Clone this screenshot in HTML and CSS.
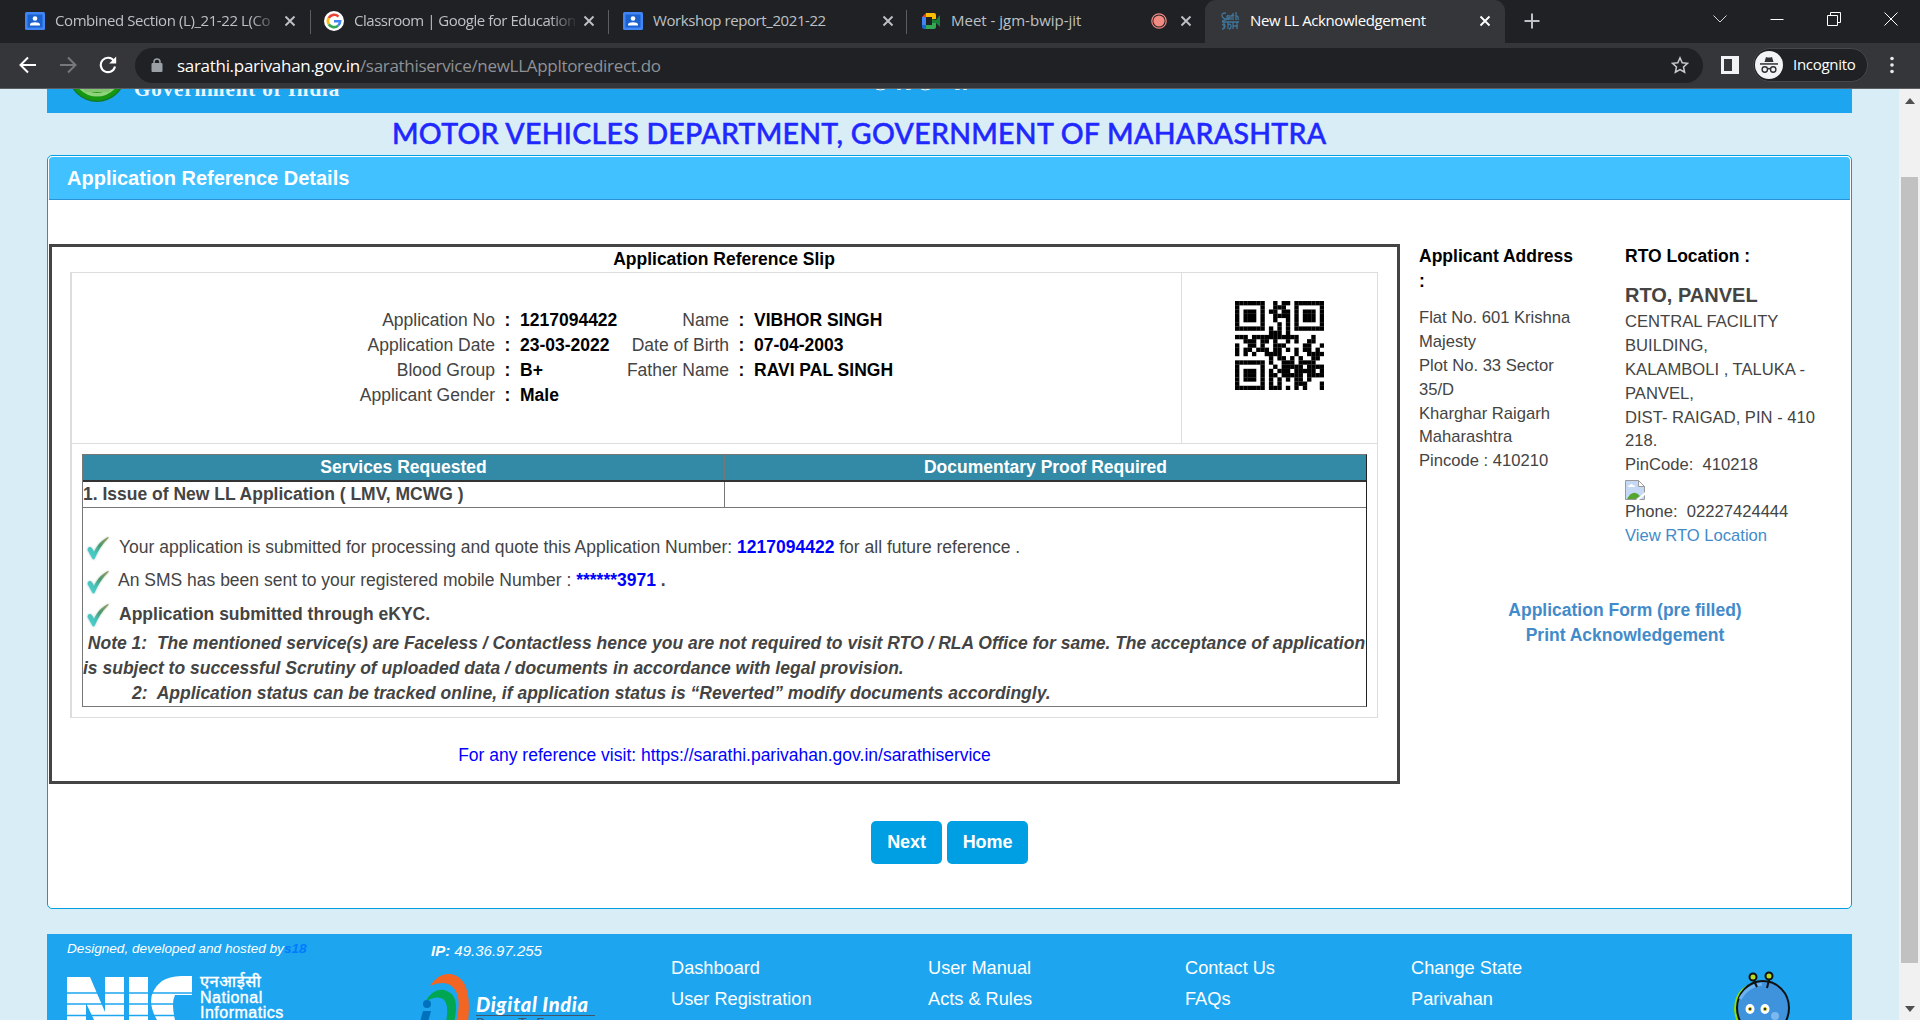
FILE: index.html
```html
<!DOCTYPE html>
<html lang="en">
<head>
<meta charset="utf-8">
<title>New LL Acknowledgement</title>
<link rel="stylesheet" href="styles.css">
</head>
<body>
<svg class="defs" width="0" height="0">
  <symbol id="x" viewBox="0 0 12 12"><path d="M1.5 1.5l9 9M10.5 1.5l-9 9" stroke="currentColor" stroke-width="1.9" fill="none"/></symbol>
  <symbol id="classroom" viewBox="0 0 20 18"><rect width="20" height="18" rx="1.5" fill="#4285f4"/><rect x="2.5" y="2.500" width="15" height="13" fill="#1b62cf"/><circle cx="10" cy="6.500" r="2.300" fill="#fff"/><path d="M5 13.500v-1c0-3 10-3 10 0v1z" fill="#fff"/></symbol>
  <symbol id="tick" viewBox="0 0 26 26"><path d="M2 13c2-2 4-1 6 4C11 10 16 5 22 2c1 0 1 1 0 1.500C16 9 12 16 9 23c-1 2-2 2-3 0L1.500 15z" fill="url(#tg)" filter="drop-shadow(0 0 1px #a9c8bb)"/></symbol>
  <linearGradient id="tg" x1="0" y1="1" x2="1" y2="0"><stop offset="0" stop-color="#4fd3d2"/><stop offset=".35" stop-color="#45c3bd"/><stop offset=".6" stop-color="#4b9a6c"/><stop offset="1" stop-color="#a39a60"/></linearGradient>
</svg>

<header class="browser">
  <div class="tabs">
    <div class="tab t1"><svg class="fav"><use href="#classroom"/></svg><span class="tt fade">Combined Section (L)_21-22 L(Co</span><svg class="close"><use href="#x"/></svg></div>
    <div class="tab t2"><svg class="fav" viewBox="0 0 20 20"><circle cx="10" cy="10" r="10" fill="#fff"/><g fill="none" stroke-width="2.600"><path d="M14.500 5.600A6.200 6.200 0 0 0 4.700 7" stroke="#ea4335"/><path d="M4.700 7a6.200 6.200 0 0 0 0 6.200" stroke="#fbbc05"/><path d="M4.700 13.200a6.200 6.200 0 0 0 9.400 1.400" stroke="#34a853"/><path d="M10 10.200h6.200a6.200 6.200 0 0 1-2.100 4.400" stroke="#4285f4"/></g></svg><span class="tt fade">Classroom | Google for Education</span><svg class="close"><use href="#x"/></svg></div>
    <div class="tab t3"><svg class="fav"><use href="#classroom"/></svg><span class="tt">Workshop report_2021-22</span><svg class="close"><use href="#x"/></svg></div>
    <div class="tab t4"><svg class="fav" viewBox="0 0 20 18"><path d="M5 1h8q2 0 2 2v4h-4V5H5z" fill="#fbbc04"/><path d="M5 1v4H1z" fill="#ea4335"/><path d="M1 5h4v8H1z" fill="#4285f4"/><path d="M1 13h4v4H3q-2 0-2-2z" fill="#1967d2"/><path d="M5 13h6v-2h4v4q0 2-2 2H5z" fill="#34a853"/><path d="M11 7l4 1 4-5v12l-4-4-4 0z" fill="#188038"/></svg><span class="tt">Meet - jgm-bwip-jit</span><svg class="rec" viewBox="0 0 16 16"><circle cx="8" cy="8" r="5.600" fill="#f28b82"/><circle cx="8" cy="8" r="7.200" fill="none" stroke="#f28b82" stroke-width="1.200"/></svg><svg class="close"><use href="#x"/></svg></div>
    <div class="tab active"><svg class="fav" viewBox="0 0 20 18"><g fill="none" stroke="#3f7397" stroke-width="1.300"><path d="M6 1Q1 1 2 4t4 3-4 2M8 3q-2 2 0 4t1-4v4M11 3v5M11 4q2-2 3 0M13 1v7M16 0v8M16 4q3 0 2 4M2 10h17M4 10v7M2 13q3-2 3 1t-3 3M8 10v7M8 13q3-2 3 1t-2 3M13 10v7M17 10v7M13 14h5"/></g></svg><span class="tt">New LL Acknowledgement</span><svg class="close"><use href="#x"/></svg></div>
    <svg class="plus" viewBox="0 0 16 16"><path d="M8 .5v15M.5 8h15" stroke="#bdc1c6" stroke-width="2"/></svg>
    <div class="win">
      <svg width="14" height="8" viewBox="0 0 14 8"><path d="M.5.500L7 7 13.500.500" fill="none" stroke="#d5d6d8"/></svg>
      <svg width="14" height="8" viewBox="0 0 14 8"><path d="M.5 4.500h13" stroke="#fff"/></svg>
      <svg width="14" height="14" viewBox="0 0 14 14"><path d="M.5 3.500h10v10H.5zM3.500 3.500V.5h10v10h-3" fill="none" stroke="#fff"/></svg>
      <svg width="14" height="14" viewBox="0 0 14 14"><path d="M.5.500l13 13M13.500.500l-13 13" stroke="#fff"/></svg>
    </div>
  </div>
  <div class="toolbar">
    <svg class="nav" viewBox="0 0 18 18"><path d="M17 9H2M9 1.500L1.500 9 9 16.500" fill="none" stroke="#fff" stroke-width="2"/></svg>
    <svg class="nav" viewBox="0 0 18 18"><path d="M1 9h15M9 1.500L16.500 9 9 16.500" fill="none" stroke="#77787b" stroke-width="2"/></svg>
    <svg class="nav" viewBox="0 0 18 18"><path d="M15 5A7.200 7.200 0 1 0 16 10.500" fill="none" stroke="#fff" stroke-width="2.100"/><path d="M17.200.500v7h-7z" fill="#fff"/></svg>
    <div class="omni">
      <svg width="12" height="14" viewBox="0 0 12 14"><path d="M3 6V4a3 3 0 0 1 6 0v2" fill="none" stroke="#9aa0a6" stroke-width="1.500"/><rect x=".5" y="5" width="11" height="9" rx="1" fill="#9aa0a6"/></svg>
      <span class="url"><b>sarathi.parivahan.gov.in</b>/sarathiservice/newLLAppltoredirect.do</span>
      <svg class="star" viewBox="0 0 18 18"><path d="M9 1.800l2.200 4.900 5.300.600-4 3.600 1.100 5.300L9 13.500l-4.600 2.700 1.100-5.300-4-3.600 5.300-.600z" fill="none" stroke="#c8cacd" stroke-width="1.500"/></svg>
    </div>
    <svg class="side" viewBox="0 0 18 18"><rect width="18" height="18" fill="#f1f3f4"/><rect x="3" y="3" width="8" height="12" fill="#35363a"/></svg>
    <div class="incog"><svg width="28" height="28" viewBox="0 0 28 28"><circle cx="14" cy="14" r="14" fill="#f1f3f4"/><g fill="#303134"><path d="M9.500 11l1.500-5q3 1 6 0l1.500 5z"/><rect x="5" y="12.200" width="18" height="1.500"/></g><g fill="none" stroke="#303134" stroke-width="1.400"><circle cx="9.800" cy="18.500" r="2.700"/><circle cx="18.200" cy="18.500" r="2.700"/><path d="M12.500 18q1.500-1 3 0"/></g></svg><span>Incognito</span></div>
    <svg class="dots" viewBox="0 0 4 18"><g fill="#e8eaed"><circle cx="2" cy="2.500" r="1.800"/><circle cx="2" cy="9" r="1.800"/><circle cx="2" cy="15.500" r="1.800"/></g></svg>
  </div>
</header>

<div class="view">
<main>
  <div class="banner">
    <svg class="emblem" viewBox="0 0 60 60"><circle cx="30" cy="30" r="29" fill="#147b2a"/><circle cx="30" cy="30" r="27.500" fill="#15980f"/><circle cx="30" cy="29" r="24.500" fill="#8fd47a"/><circle cx="30" cy="28" r="22" fill="#1f9c19"/><path d="M15 44h30l-3 5H18z" fill="#83c66f"/></svg>
    <span class="goi">Government of India</span>
    <svg class="marks" width="96" height="3" viewBox="0 0 96 3"><path d="M1 0q4 2 9 0M22 0q3 1 4 0M31 0q2 1 5 0M46 0q4 2 9 0M80 0q2 1 5 0M88 0q2 1 4 0" stroke="#fff" stroke-width="1" fill="none"/></svg>
  </div>
  <h1>MOTOR VEHICLES DEPARTMENT, GOVERNMENT OF MAHARASHTRA</h1>
  <section class="panel">
    <h2>Application Reference Details</h2>
    <div class="cols">
      <div class="slip">
        <h3>Application Reference Slip</h3>
        <div class="inner">
          <div class="top">
            <div class="facts">
              <span>Application No</span><i>:</i><b>1217094422</b><span>Name</span><i>:</i><b>VIBHOR SINGH</b>
              <span>Application Date</span><i>:</i><b>23-03-2022</b><span>Date of Birth</span><i>:</i><b>07-04-2003</b>
              <span>Blood Group</span><i>:</i><b>B+</b><span>Father Name</span><i>:</i><b>RAVI PAL SINGH</b>
              <span>Applicant Gender</span><i>:</i><b>Male</b>
            </div>
            <div class="qr"><svg id="qr" viewBox="0 0 21 21"></svg></div>
          </div>
          <div class="svc">
            <div class="shead"><span>Services Requested</span><span>Documentary Proof Required</span></div>
            <div class="srow"><span>1. Issue of New LL Application ( LMV, MCWG )</span><span></span></div>
            <div class="msgs">
              <p><svg><use href="#tick"/></svg><span>Your application is submitted for processing and quote this Application Number: <b>1217094422</b> for all future reference .</span></p>
              <p><svg><use href="#tick"/></svg><span class="sms">An SMS has been sent to your registered mobile Number : <b>******3971</b> <strong>.</strong></span></p>
              <p><svg><use href="#tick"/></svg><span><strong>Application submitted through eKYC.</strong></span></p>
              <div class="note"><div>&nbsp;Note 1:&nbsp; The mentioned service(s) are Faceless / Contactless hence you are not required to visit RTO / RLA Office for same. The acceptance of application</div><div>is subject to successful Scrutiny of uploaded data / documents in accordance with legal provision.</div><div class="n3">2:&nbsp; Application status can be tracked online, if application status is “Reverted” modify documents accordingly.</div></div>
            </div>
          </div>
        </div>
        <div class="visit">For any reference visit: https://sarathi.parivahan.gov.in/sarathiservice</div>
      </div>
      <aside>
        <div class="addrs">
          <div class="addr"><h4>Applicant Address<br>:</h4><div class="lines">Flat No. 601 Krishna<br>Majesty<br>Plot No. 33 Sector<br>35/D<br>Kharghar Raigarh<br>Maharashtra<br>Pincode : 410210</div></div>
          <div class="rto"><h4>RTO Location :</h4><h5>RTO, PANVEL</h5><div class="lines">CENTRAL FACILITY<br>BUILDING,<br>KALAMBOLI , TALUKA -<br>PANVEL,<br>DIST- RAIGAD, PIN - 410<br>218.<br>PinCode:&nbsp; 410218<svg class="broken" viewBox="0 0 20 20"><path d="M.5.500h13l6 6v13H.5z" fill="#c5d9f5" stroke="#9a9a9a"/><path d="M13.500.500v6h6z" fill="#fff" stroke="#9a9a9a"/><path d="M3 7q0-2 2-2 1-2 3 0 2 0 2 2z" fill="#fff"/><path d="M2 19q6-11 13-3l-4 3z" fill="#55a630"/><path d="M11 20l9-8v3l-6 5z" fill="#fff"/></svg>Phone:&nbsp; 02227424444<br><a>View RTO Location</a></div></div>
        </div>
        <div class="links"><a>Application Form (pre filled)</a><a>Print Acknowledgement</a></div>
      </aside>
    </div>
    <div class="btns"><button>Next</button><button class="home">Home</button></div>
  </section>
  <footer>
    <div class="nic"><div class="by">Designed, developed and hosted by<b>s18</b></div>
      <div class="logo"><svg width="125" height="44" viewBox="0 0 125 44"><path d="M0 1h23l15 35V1h19v43H27L19 27v17H0zM62 1h19v43H62zM125 0v19h-17q-4 8 0 25H90q-14-24 5-39 10-6 30-5z" fill="#fff"/><path d="M0 17h125M0 28h125M0 39.500h125" stroke="#1da5f0" stroke-width="1.700"/></svg><div class="nt"><div class="hi">एनआईसी</div><div>National</div><div>Informatics</div></div></div></div>
    <div class="di"><div class="ip"><b>IP:</b> 49.36.97.255</div>
      <div class="logo"><svg width="52" height="48" viewBox="0 0 52 48"><path d="M10 12Q18-1 31 0q22 4 17 48H36Q44 17 28 10q-8-3-18 2z" fill="#f26522"/><path d="M5 28q8-14 19-12 17 4 10 32H26q4-21-5-24-7-2-16 4z" fill="#00a650"/><circle cx="7" cy="30" r="4" fill="#0071bc"/><path d="M3 37h8l-3 11H0z" fill="#0071bc"/></svg><div class="dt"><div>Digital India</div><small>Power To Empower</small></div></div></div>
    <div class="fl"><a>Dashboard</a><a>User Registration</a></div>
    <div class="fl"><a>User Manual</a><a>Acts &amp; Rules</a></div>
    <div class="fl f3"><a>Contact Us</a><a>FAQs</a></div>
    <div class="fl f4"><a>Change State</a><a>Parivahan</a></div>
    <svg class="bot" width="60" height="70" viewBox="0 0 60 70"><path d="M30 11Q3 12 2 38q1 15 10 20" fill="#8ce000"/><ellipse cx="31" cy="37" rx="26" ry="27" fill="#3f93dc" stroke="#111" stroke-width="2"/><path d="M8 28q7-13 22-15" stroke="#6db3ef" stroke-width="3" fill="none"/><g fill="none" stroke="#111" stroke-width="2"><path d="M22 10l3 6M37 9l-2 8"/><circle cx="21" cy="6" r="3.500" fill="#b9dc20"/><circle cx="37" cy="5" r="3.500" fill="#b9dc20"/></g><g fill="#fff"><ellipse cx="18" cy="38" rx="4.500" ry="5"/><ellipse cx="33" cy="38" rx="4.500" ry="5"/></g><g fill="#222" stroke="#d4ba20"><circle cx="18" cy="38" r="1.600"/><circle cx="33" cy="38" r="1.600"/></g><ellipse cx="43" cy="45" rx="4" ry="4" fill="#7bb8ef"/></svg>
  </footer>
</main>
<div class="scroll"><svg viewBox="0 0 10 6"><path d="M0 6L5 0l5 6z"/></svg><div class="thumb"></div><svg viewBox="0 0 10 6"><path d="M0 0l5 6 5-6z"/></svg></div>
</div>
<script src="qr.js"></script>
</body>
</html>
```
FILE: qr.js
```js
const rows = [
  "XXXXXXX..X.XX.XXXXXXX",
  "X.....X..XXX..X.....X",
  "X.XXX.X.XX.XX.X.XXX.X",
  "X.XXX.X..XXXX.X.XXX.X",
  "X.XXX.X..X..X.X.XXX.X",
  "X.....X...X.X.X.....X",
  "XXXXXXX.X.X.X.XXXXXXX",
  "........XXX.X........",
  "XXX.XXXXXXXXXXX...X..",
  "..XXX.XX.X..X.X..XX..",
  "X..XX.X..XXX....XX..X",
  "X.XX.XXX.XX.X.X.XX.X.",
  "X.X.X..XXXX...X..XXXX",
  "........X.XX.X.X..XX.",
  "XXXXXXX.X..XXX.XXXX..",
  "X.....X..X.XXXXX.XXXX",
  "X.XXX.X.X.XXX.XXXXX.X",
  "X.XXX.X.XX.XXXXX.XXXX",
  "X.XXX.X.X.X.X.XX.X...",
  "X.....X.X.X...XXX...X",
  "XXXXXXX.XXX.X.X.X...X"
];
document.getElementById("qr").innerHTML = rows.map((r, y) =>
  [...r].map((c, x) => c === "X" ? `<rect x="${x}" y="${y}" width="1.03" height="1.03"/>` : "").join("")).join("");
```
FILE: styles.css
```css
* { box-sizing: border-box; }
body { margin: 0; width: 1920px; height: 1020px; overflow: hidden; font: 17.5px/25px "Liberation Sans", Arial, sans-serif; color: #444; background: #d9edf6; }
h1, h2, h3, h4, h5, p { margin: 0; }
svg { flex: none; display: block; }
.defs { position: absolute; }
.browser { height: 89px; background: #35363a; border-bottom: 1px solid #5c5e62; font-family: "Open Sans", "Noto Sans", sans-serif; }
.tabs { height: 43px; display: flex; background: #202124; }
.tab { height: 41px; display: flex; align-items: center; color: #bdc1c6; font-size: 15px; white-space: nowrap; }
.tab:not(.active) { background: linear-gradient(#5b5d60, #5b5d60) right 10px / 1px 24px no-repeat; }
.tab.t4 { background: none; }
.t1 { width: 311px; padding-left: 25px; }
.t2 { width: 298px; padding-left: 13px; }
.t3 { width: 298px; padding-left: 14px; }
.t4 { width: 298px; padding-left: 14px; }
.fav { width: 20px; height: 20px; margin-right: 10px; }
.tt { width: 221px; overflow: hidden; letter-spacing: -.42px; }
.t2 .tt { letter-spacing: -.47px; }
.active .tt { letter-spacing: -.38px; }
.t4 .tt { width: 200px; letter-spacing: 0; }
.fade { -webkit-mask-image: linear-gradient(90deg, #000 195px, transparent 224px); }
.close { width: 12px; height: 12px; margin-left: 8px; }
.rec { width: 16px; height: 16px; }
.t4 .close { margin-left: 13px; }
.active { width: 300px; height: 43px; padding: 0 0 2px 15px; background: #35363a; color: #fff; border-radius: 11px 11px 0 0; }
.plus { width: 16px; height: 16px; margin: 13px 0 0 19px; }
.win { display: flex; align-items: center; gap: 43px; margin-left: auto; height: 37px; padding-right: 22px; }
.toolbar { height: 44px; display: flex; align-items: center; padding: 0 21px 0 19px; }
.nav { width: 18px; height: 18px; margin-right: 22px; }
.omni { width: 1568px; height: 35px; margin-left: -4px; padding: 0 14px 0 16px; display: flex; align-items: center; border-radius: 18px; background: #202124; color: #8f9296; font-size: 17px; }
.url { margin-left: 14px; letter-spacing: -.3px; }
.url b { font-weight: 400; color: #fff; }
.star { width: 18px; height: 18px; margin-left: auto; }
.side { width: 18px; height: 18px; margin-left: 18px; }
.incog { width: 115px; height: 34px; margin-left: 14px; padding-left: 1px; display: flex; align-items: center; gap: 10px; border: 1px solid #46474b; border-radius: 17px; background: #202124; color: #fff; font-size: 15px; letter-spacing: -.3px; }
.incog span { margin-top: -2px; }
.dots { width: 4px; height: 18px; margin-left: 22px; }

.view { height: 931px; display: flex; }
main { width: 1899px; padding: 0 47px; }
.banner { height: 24px; overflow: hidden; display: flex; align-items: flex-end; background: #1da5f0; }
.emblem { width: 60px; height: 60px; margin: 0 0 10px 20px; }
.goi { margin: 0 0 11px 7px; font: bold 21px/25px "Liberation Serif", serif; color: #e8f6ff; width: 205px; white-space: nowrap; letter-spacing: .9px; }
.marks { align-self: flex-start; margin-left: 536px; }
h1 { height: 42px; width: 1805px; padding-left: 345px; font: 500 28.5px/40px Lato, "Open Sans", sans-serif; color: #1f28ff; -webkit-text-stroke: .5px #1f28ff; letter-spacing: .28px; white-space: nowrap; }
.panel { width: 1805px; height: 754px; border: 1px solid #00a0e0; border-radius: 5px; padding: 1px; background: #fff; }
h2 { height: 43px; padding: 0 18px; background: #41c1ff; border-bottom: 1px solid #2b92d6; border-radius: 4px 4px 0 0; color: #fff; font: bold 20px/42px "Liberation Sans", sans-serif; }
.cols { display: flex; padding-top: 44px; height: 584px; }
.slip { width: 1351px; height: 540px; border: 3px solid #444; padding: 0 19px 0 18px; }
h3 { height: 25px; font-size: 17.5px; line-height: 25px; text-align: center; color: #000; }
.inner { width: 1308px; height: 446px; border: 1px solid #ddd; border-left-width: 2px; }
.top { height: 171px; display: flex; border-bottom: 1px solid #ddd; }
.facts { width: 1110px; height: 170px; padding-top: 35px; display: grid; align-content: start; grid-template-columns: 423px 25px 105px 104px 25px 1fr; grid-auto-rows: 25px; border-right: 1px solid #ddd; white-space: nowrap; }
.facts span { text-align: right; }
.facts i { text-align: center; font-style: normal; font-weight: bold; color: #000; }
.facts b { color: #000; }
.qr { width: 195px; padding-top: 28px; display: flex; justify-content: center; align-items: flex-start; }
#qr { width: 89px; height: 89px; }
.svc { margin: 10px 0 0 10px; width: 1285px; border: 1px solid #777; border-right-color: #222; }
.shead, .srow { display: grid; grid-template-columns: 641px 1fr; white-space: nowrap; font-weight: bold; }
.shead { height: 27px; line-height: 25px; background: #338aa6; color: #fff; text-align: center; border-bottom: 2px solid #333; }
.srow { height: 26px; line-height: 25px; border-bottom: 1px solid #777; }
.shead span + span, .srow span + span { border-left: 1px solid #777; }
.msgs { height: 198px; padding-top: 25px; white-space: nowrap; }
.msgs p { display: flex; height: 33.5px; }
.msgs p svg { width: 26px; height: 26px; margin: 2px 7px 0 3px; }
.msgs p span { padding-top: 2px; }
.msgs p .sms { padding-top: 1px; margin-left: -1px; }
.msgs p b { color: #00f; }
.note { margin-top: -3px; font-weight: bold; font-style: italic; }
.n3 { padding-left: 49px; }
.visit { margin-top: 25px; text-align: center; color: #00f; padding-left: 1px; }
aside { padding-left: 19px; width: 450px; }
.addrs { display: flex; }
.addr { width: 206px; }
h4 { font-size: 17.5px; line-height: 25px; color: #000; }
h5 { font-size: 20px; line-height: 26px; margin-top: 13px; }
.lines { font-size: 16.6px; line-height: 23.87px; white-space: nowrap; }
.addr .lines { margin-top: 12px; }
.rto .lines { margin-top: 2px; }
.broken { width: 20px; height: 20px; margin: 3px 0 0; }
a { color: #428bca; }
.links { display: flex; flex-direction: column; align-items: center; width: 412px; margin-top: 50px; font-weight: bold; }
.btns { display: flex; gap: 5px; padding: 37px 0 0 822px; }
button { width: 71px; height: 43px; border: 0; border-radius: 5px; background: #009fe3; color: #fff; font: bold 18px "Liberation Sans", sans-serif; padding: 0; letter-spacing: -.1px; }
.home { width: 81px; }
footer { width: 1805px; height: 86px; margin-top: 25px; overflow: hidden; display: flex; background: #1da5f0; color: #fff; padding-left: 20px; white-space: nowrap; }
.nic { width: 353px; }
.by { font: italic 13.6px/20px "Liberation Sans", sans-serif; padding-top: 5px; height: 42px; }
.by b { color: #007bff; }
.nic .logo { display: flex; gap: 8px; }
.nt { font: 16px/15px "Liberation Sans", sans-serif; -webkit-text-stroke: .4px #fff; margin-top: -4px; letter-spacing: .5px; }
.hi { height: 18px; font: 16.5px/18px "Noto Sans", "Open Sans", sans-serif; }
.ip { font: italic 15px/20px "Liberation Sans", sans-serif; padding: 7px 0 0 11px; height: 40px; }
.di { width: 251px; }
.di .logo { display: flex; }
.dt { padding: 18px 0 0 4px; font: italic 900 20px/24px Lato, sans-serif; }
.dt div { border-bottom: 1px solid #456; height: 24px; letter-spacing: .65px; }
.dt small { display: block; font: 14px/14px Lato, sans-serif; color: #38586b; }
.fl { width: 257px; display: flex; flex-direction: column; padding-top: 19px; line-height: 31px; font-size: 18.2px; }
.fl a { color: #fff; }
.f3 { width: 226px; }
.f4 { width: 321px; }
.bot { margin-top: 37px; }
.scroll { width: 21px; background: #f1f1f1; display: flex; flex-direction: column; align-items: center; padding: 9px 0 7px; }
.scroll svg { width: 10px; height: 6px; fill: #505050; }
.thumb { width: 17px; height: 786px; margin: 73px 0 43px; background: #c1c1c1; }
```
